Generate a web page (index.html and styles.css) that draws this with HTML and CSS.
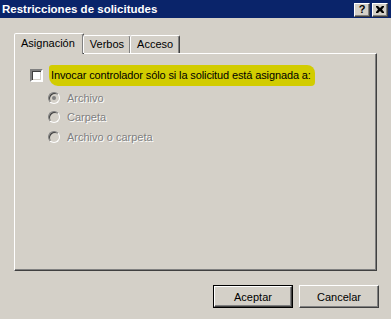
FILE: index.html
```html
<!DOCTYPE html>
<html lang="es">
<head>
    <meta charset="UTF-8">
    <title>Restricciones de solicitudes</title>
    <link rel="stylesheet" href="styles.css">
</head>
<body>
    <div class="title-bar">
        <span class="title">Restricciones de solicitudes</span>
        <div class="title-buttons">
            <button class="cap-btn">?</button>
            <button class="cap-btn close">
                <svg width="8" height="7" viewBox="0 0 8 7"><path d="M0 0h2l2 2 2-2h2v1L6 3.5 8 6v1H6L4 5 2 7H0V6l2-2.5L0 1z" fill="#000"/></svg>
            </button>
        </div>
    </div>
    <div class="dialog">
        <div class="tabs">
            <div class="tab selected">Asignación</div>
            <div class="tab">Verbos</div>
            <div class="tab">Acceso</div>
        </div>
        <div class="panel">
            <div class="check-row">
                <span class="checkbox"></span>
                <span class="marker">Invocar controlador sólo si la solicitud está asignada a:</span>
            </div>
            <div class="radio-list">
                <div class="radio-row"><span class="radio checked"></span><span class="disabled">Archivo</span></div>
                <div class="radio-row"><span class="radio"></span><span class="disabled">Carpeta</span></div>
                <div class="radio-row"><span class="radio"></span><span class="disabled">Archivo o carpeta</span></div>
            </div>
        </div>
        <div class="footer">
            <button class="btn default">Aceptar</button>
            <button class="btn">Cancelar</button>
        </div>
    </div>
</body>
</html>
```

FILE: styles.css
```css
body {
    margin: 0;
    background-color: #d4d0c8;
    font-family: "Liberation Sans", Arial, sans-serif;
    font-size: 11px;
    color: #000;
    width: 391px;
    height: 319px;
    overflow: hidden;
}
.title-bar {
    display: flex;
    align-items: center;
    justify-content: space-between;
    height: 18px;
    background-color: #0a246a;
    padding: 0 3px 0 2px;
}
.title {
    color: white;
    font-weight: bold;
    font-size: 11.5px;
}
.title-buttons {
    display: flex;
    gap: 2px;
    margin-top: 1px;
}
.cap-btn {
    width: 16px;
    height: 14px;
    padding: 0;
    background-color: #d4d0c8;
    border: 1px solid;
    border-color: #fff #404040 #404040 #fff;
    box-shadow: inset -1px -1px #808080;
    font-family: "Liberation Sans", Arial, sans-serif;
    font-weight: bold;
    font-size: 11px;
    line-height: 11px;
    display: flex;
    align-items: center;
    justify-content: center;
}
.dialog {
    padding: 15px 14px 0 14px;
}
.tabs {
    display: flex;
    align-items: flex-end;
    height: 20px;
    position: relative;
    z-index: 1;
}
.tab {
    height: 17px;
    padding: 0 6px;
    line-height: 17px;
    border: 1px solid;
    border-bottom: none;
    border-color: #fff #404040 transparent #fff;
    box-shadow: inset -1px 0 #808080;
    border-radius: 2px 2px 0 0;
    margin-left: -1px;
}
.tab.selected {
    height: 20px;
    margin-left: 0;
    margin-bottom: -1px;
    padding: 0 8px 0 6px;
    line-height: 19px;
    background-color: #d4d0c8;
}
.panel {
    width: 361px;
    height: 216px;
    border: 1px solid;
    border-color: #fff #404040 #404040 #fff;
    box-shadow: inset -1px -1px #808080;
    padding: 0;
}
.check-row {
    display: flex;
    align-items: center;
    margin: 12px 0 0 15px;
    height: 19px;
}
.checkbox {
    width: 9px;
    height: 9px;
    background-color: #fff;
    border: 2px solid;
    border-color: #808080 #fff #fff #808080;
    box-shadow: inset 1px 1px #404040, inset -1px -1px #d4d0c8;
    margin-right: 6px;
}
.marker {
    background-color: #d2cc00;
    padding: 4px 4px 5px 2px;
    border-radius: 3px 8px 4px 9px;
    letter-spacing: -0.12px;
}
.radio-list {
    display: flex;
    flex-direction: column;
    margin: 3px 0 0 33px;
}
.radio-row {
    display: flex;
    align-items: center;
    height: 19.5px;
}
.radio {
    width: 12px;
    height: 12px;
    box-sizing: border-box;
    border-radius: 50%;
    border: 1px solid;
    border-color: #808080 #fff #fff #808080;
    box-shadow: inset 1px 1px #404040;
    background-color: #d4d0c8;
    margin-right: 7px;
    display: flex;
    align-items: center;
    justify-content: center;
}
.radio.checked::after {
    content: '';
    width: 4px;
    height: 4px;
    border-radius: 50%;
    background-color: #808080;
}
.disabled {
    color: #808080;
    text-shadow: 1px 1px #fff;
}
.footer {
    display: flex;
    justify-content: flex-end;
    gap: 6px;
    margin-top: 14px;
    margin-right: -2px;
}
.btn {
    width: 80px;
    height: 23px;
    background-color: #d4d0c8;
    border: 1px solid;
    border-color: #fff #404040 #404040 #fff;
    box-shadow: inset -1px -1px #808080;
    font-family: "Liberation Sans", Arial, sans-serif;
    font-size: 11px;
    color: #000;
    padding: 0;
}
.btn.default {
    box-shadow: inset -1px -1px #808080, 0 0 0 1px #000;
    width: 78px;
    height: 21px;
    margin: 1px;
}
```
